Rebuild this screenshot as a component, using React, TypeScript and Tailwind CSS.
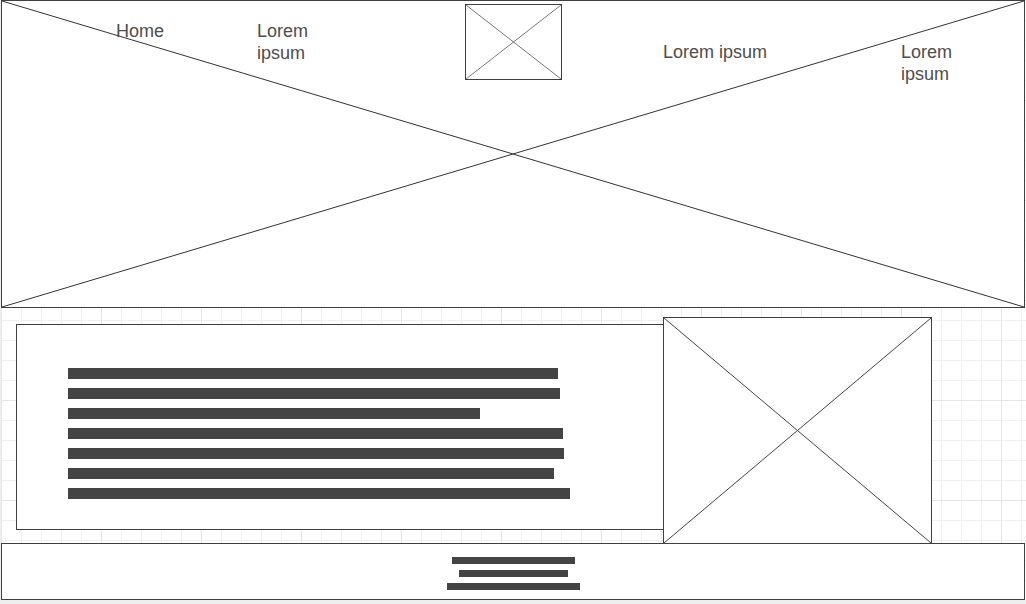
import React from "react";

const textBars = [490, 492, 412, 495, 496, 486, 502];
const footerBars = [123, 109, 133];

function CrossBox({ className, stroke }: { className: string; stroke: string }) {
  return (
    <div className={`border border-[#3f3f3f] bg-white ${className}`}>
      <svg
        className="absolute inset-0 h-full w-full"
        viewBox="0 0 100 100"
        preserveAspectRatio="none"
      >
        <line x1="0" y1="0" x2="100" y2="100" stroke={stroke} strokeWidth="1" vectorEffect="non-scaling-stroke" />
        <line x1="100" y1="0" x2="0" y2="100" stroke={stroke} strokeWidth="1" vectorEffect="non-scaling-stroke" />
      </svg>
    </div>
  );
}

export default function App() {
  return (
    <div className="min-h-screen bg-[#eeeeee] pl-[1px] font-['Liberation_Sans',Arial,sans-serif]">
      <div className="flex h-[600px] w-[1025px] flex-col bg-white bg-[linear-gradient(to_right,#e6e6e6_1px,transparent_1px),linear-gradient(to_bottom,#e6e6e6_1px,transparent_1px),linear-gradient(to_right,#f0f0f0_1px,transparent_1px),linear-gradient(to_bottom,#f0f0f0_1px,transparent_1px)] bg-[size:100px_100px,100px_100px,20px_20px,20px_20px]">
        {/* header */}
        <div className="relative h-[308px] w-[1024px] shrink-0">
          <CrossBox className="absolute inset-0" stroke="#333" />
          <nav className="relative flex items-start text-[18px] leading-[22px] text-[#4d4d4d]">
            <span className="ml-[115px] mt-[20px]">Home</span>
            <span className="ml-[93px] mt-[20px] w-[60px]">Lorem ipsum</span>
            <CrossBox className="relative ml-[148px] mt-[4px] h-[76px] w-[97px] shrink-0" stroke="#777" />
            <span className="ml-[101px] mt-[41px]">Lorem ipsum</span>
            <span className="ml-[134px] mt-[41px] w-[60px]">Lorem ipsum</span>
          </nav>
        </div>

        {/* content */}
        <div className="flex h-[235px] shrink-0 items-start">
          <div className="ml-[15px] mt-[16px] flex h-[206px] w-[648px] flex-col gap-[9px] border border-[#3f3f3f] bg-white pl-[51px] pt-[43px]">
            {textBars.map((w, i) => (
              <div key={i} className="h-[11px] bg-[#444]" style={{ width: w }} />
            ))}
          </div>
          <CrossBox className="relative z-10 ml-[-1px] mt-[9px] h-[227px] w-[269px] shrink-0" stroke="#444" />
        </div>

        {/* footer */}
        <div className="flex h-[57px] w-[1024px] shrink-0 flex-col items-center gap-[6px] border border-[#3f3f3f] bg-white pt-[13px]">
          {footerBars.map((w, i) => (
            <div key={i} className="h-[7px] bg-[#444]" style={{ width: w }} />
          ))}
        </div>
      </div>
    </div>
  );
}
